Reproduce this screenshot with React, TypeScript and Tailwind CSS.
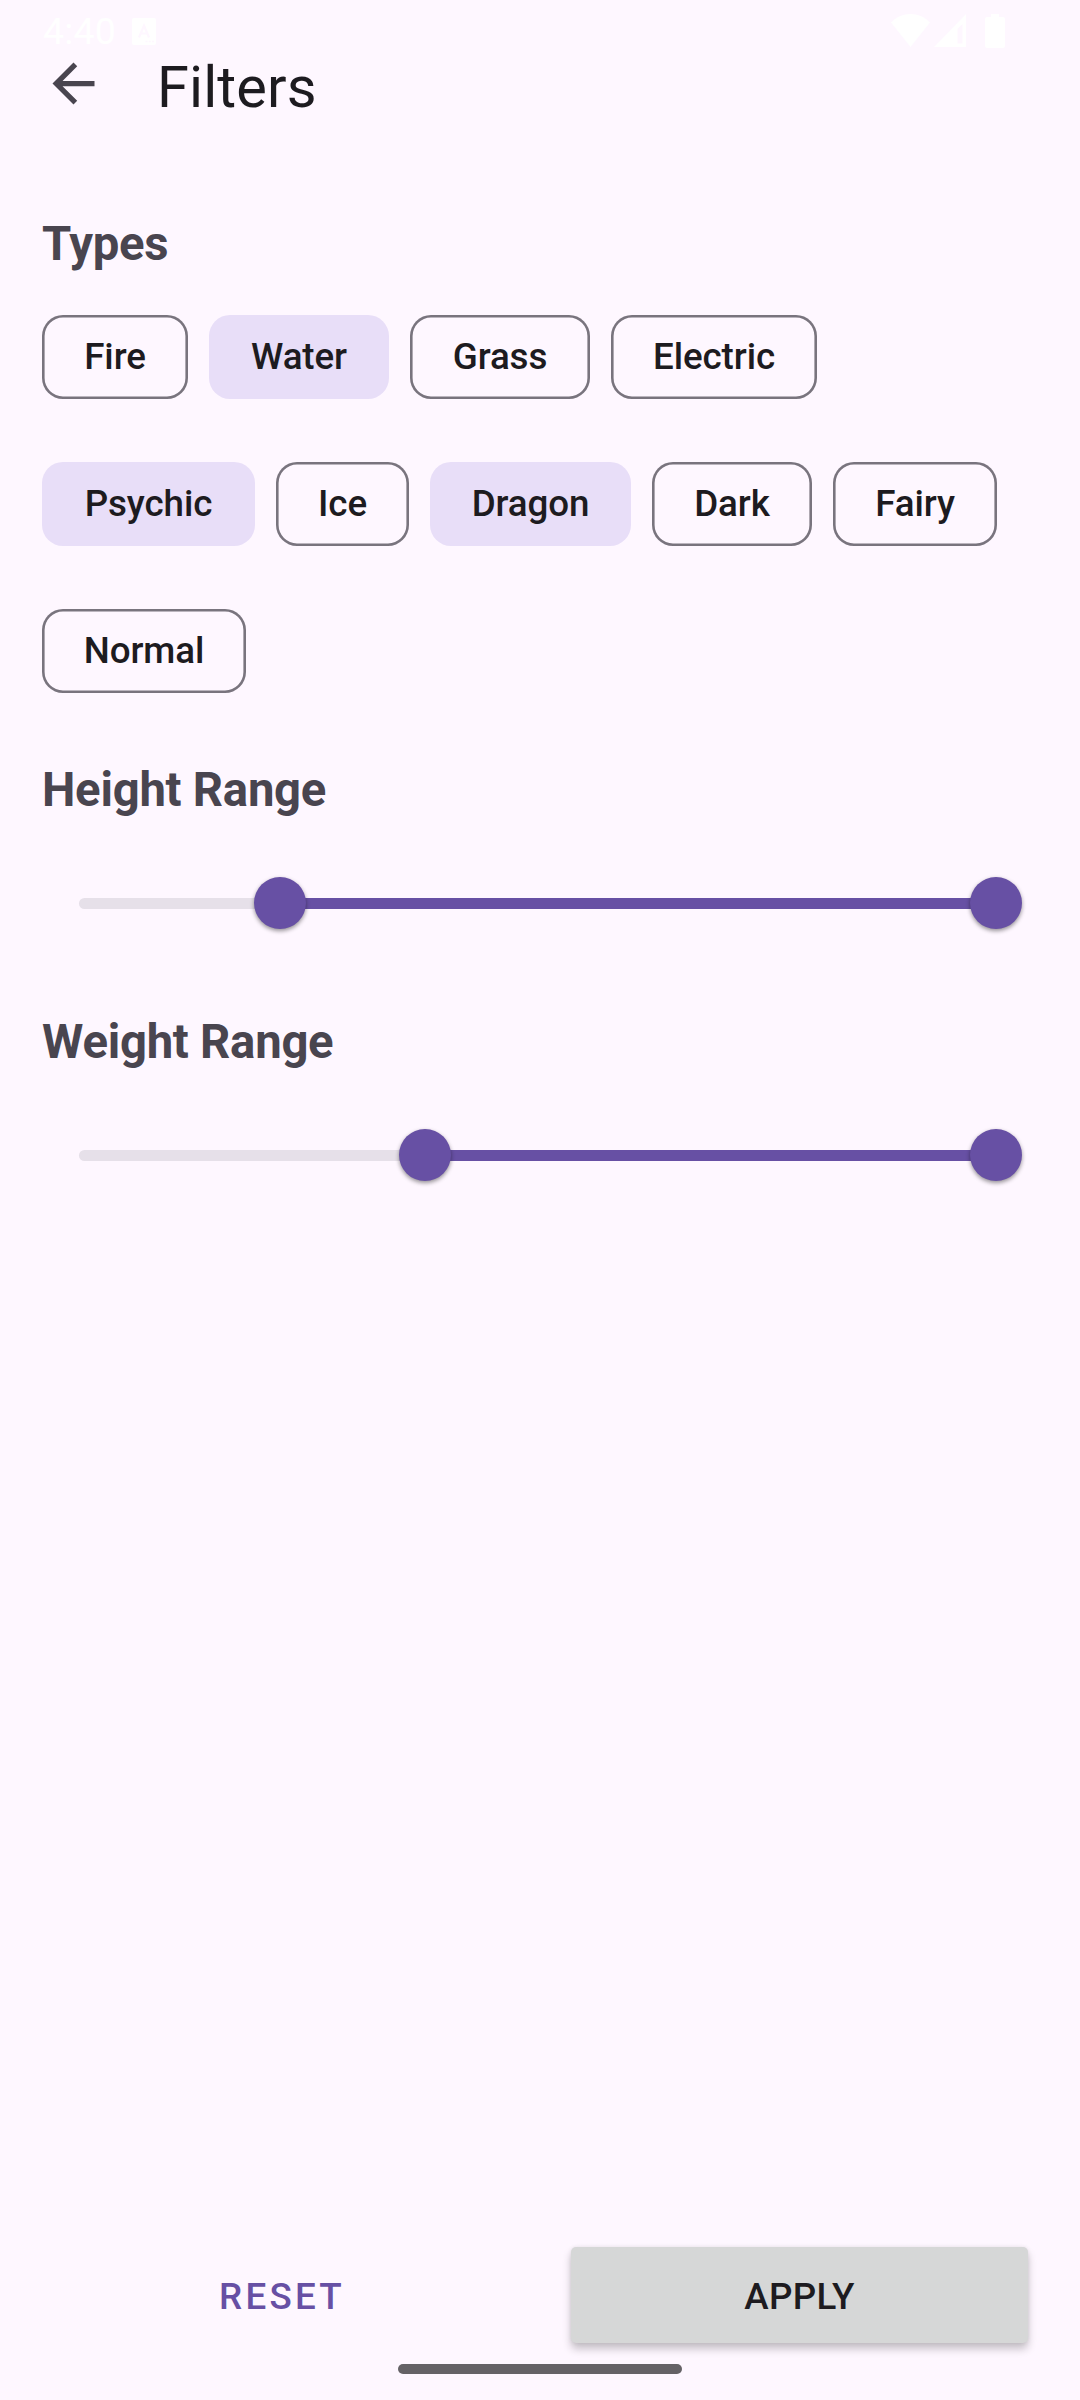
const chipRows = [
  [
    { label: "Fire", width: 146, on: false },
    { label: "Water", width: 180, on: true },
    { label: "Grass", width: 180, on: false },
    { label: "Electric", width: 206, on: false },
  ],
  [
    { label: "Psychic", width: 213, on: true },
    { label: "Ice", width: 133, on: false },
    { label: "Dragon", width: 201, on: true },
    { label: "Dark", width: 160, on: false },
    { label: "Fairy", width: 164, on: false },
  ],
  [{ label: "Normal", width: 204, on: false }],
];

function Chip({ label, width, on }: { label: string; width: number; on: boolean }) {
  return (
    <button
      style={{ width }}
      className={
        "h-[84px] shrink-0 rounded-[21px] pb-[2px] text-center text-[36.75px] font-medium leading-[84px] tracking-[-0.1px] whitespace-nowrap text-[#1d1b20] " +
        (on ? "bg-[#e8def8]" : "shadow-[inset_0_0_0_2.6px_#79747e]")
      }
    >
      {label}
    </button>
  );
}

function Heading({ children }: { children: string }) {
  return (
    <h2 className="h-[56px] text-[47.25px] font-bold leading-[58px] tracking-[-0.25px] text-[#49454f]">{children}</h2>
  );
}

/* Range slider; `start` is the left thumb's centre measured from the track's left edge. */
function RangeSlider({ start }: { start: number }) {
  return (
    <div className="relative mx-[37px] h-[52px]">
      <div className="absolute top-[20.5px] right-[5px] left-0 h-[11px] rounded-full bg-[#e6e0e9]" />
      <div className="absolute top-[20.5px] right-[5px] h-[11px] bg-[#6750a4]" style={{ left: start }} />
      <div
        className="absolute top-0 h-[52px] w-[52px] rounded-full bg-[#6750a4] shadow-[0_2px_4px_rgba(0,0,0,0.42)]"
        style={{ left: start - 26 }}
      />
      <div className="absolute top-0 -right-[21px] h-[52px] w-[52px] rounded-full bg-[#6750a4] shadow-[0_2px_4px_rgba(0,0,0,0.42)]" />
    </div>
  );
}

function StatusBar() {
  return (
    <div className="flex h-[52px] items-start pl-[43px] text-white">
      <span className="mt-[9px] w-[89px] text-[37.5px] font-normal leading-[44px] tracking-[0.2px]">4:40</span>
      <svg className="mt-[18px]" width="24" height="27" viewBox="0 0 24 27">
        <rect width="24" height="27" rx="2" fill="#fff" />
        <path d="M7 19.500L12 7.500l5 12M9 15.500h6" fill="none" stroke="#fef7ff" strokeWidth="2.2" />
        <path d="M13.500 23.500h9" stroke="#fef7ff" strokeWidth="1.600" strokeDasharray="2 1.200" />
      </svg>
      <svg className="mt-[14px] ml-[735px]" width="39" height="34" viewBox="0 0 39 34" fill="#fff">
        <path d="M0 8.500C11-2.800 28-2.800 39 8.500L19.500 33Z" />
      </svg>
      <svg className="mt-[14px] ml-[3px]" width="33" height="33" viewBox="0 0 33 33" fill="#fff">
        <path fillRule="evenodd" d="M33 0V33H1ZM29.500 10L24.500 15V29.500H29.500Z" />
      </svg>
      <svg className="mt-[14px] ml-[19px]" width="20" height="34" viewBox="0 0 20 34" fill="#fff">
        <path d="M6 0h8v3h4a2 2 0 0 1 2 2v27a2 2 0 0 1-2 2H2a2 2 0 0 1-2-2V5a2 2 0 0 1 2-2h4z" />
      </svg>
    </div>
  );
}

export default function App() {
  return (
    <div className="flex h-[2400px] w-[1080px] flex-col overflow-hidden bg-[#fef7ff] font-[Roboto,sans-serif]">
      <StatusBar />
      <header className="flex h-[63px] items-start pl-[42px]">
        <button aria-label="Back">
          <svg width="63" height="63" viewBox="0 0 24 24" fill="#49454f">
            <path d="M20,11H7.830l5.590,-5.590L12,4l-8,8 8,8 1.410,-1.410L7.830,13H20v-2z" />
          </svg>
        </button>
        <h1 className="ml-[52px] text-[57.75px] font-normal leading-[70px] tracking-[0.1px] text-[#1d1b20]">Filters</h1>
      </header>

      <main className="flex flex-1 flex-col px-[42px] pt-[100px]">
        <Heading>Types</Heading>
        <div className="mt-[44px] flex flex-col gap-[63px]">
          {chipRows.map((row) => (
            <div key={row[0].label} className="flex gap-[21px]">
              {row.map((chip) => (
                <Chip key={chip.label} {...chip} />
              ))}
            </div>
          ))}
        </div>
        <div className="mt-[68px]">
          <Heading>Height Range</Heading>
        </div>
        <div className="mt-[60px]">
          <RangeSlider start={201} />
        </div>
        <div className="mt-[84px]">
          <Heading>Weight Range</Heading>
        </div>
        <div className="mt-[60px]">
          <RangeSlider start={346} />
        </div>
      </main>

      <footer className="flex h-[96px] pl-[42px] text-[36.75px] font-medium leading-[98px]">
        <button className="w-[480px] pt-[1px] text-center tracking-[3.28px] text-[#6750a4]">RESET</button>
        <button className="ml-[49px] h-[96px] w-[457px] rounded-[5px] bg-[#d6d7d7] pt-[1px] text-center tracking-[0.3px] text-[#1d1b20] shadow-[0_6px_8px_rgba(0,0,0,0.22),0_0_4px_rgba(0,0,0,0.08)]">
          APPLY
        </button>
      </footer>
      <div className="flex h-[57px] justify-center pt-[21px]">
        <div className="h-[10px] w-[284px] rounded-full bg-[#656266]" />
      </div>
    </div>
  );
}
